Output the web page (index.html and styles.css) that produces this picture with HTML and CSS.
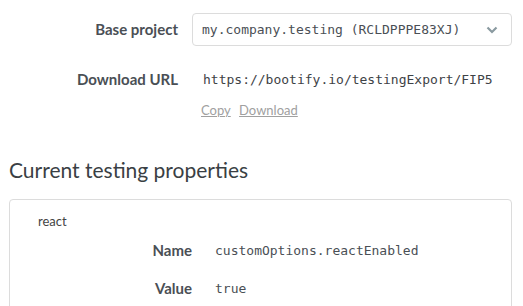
FILE: index.html
```html
<!DOCTYPE html>
<html lang="en">
<head>
  <meta charset="UTF-8">
  <title>Bootify - Testing export</title>
  <link rel="stylesheet" href="styles.css">
</head>
<body>
  <div class="page">
    <div class="form-row">
      <label class="form-label" for="baseProject">Base project</label>
      <div class="select-wrap">
        <select id="baseProject" class="form-select">
          <option>my.company.testing (RCLDPPPE83XJ)</option>
        </select>
        <svg class="chevron" width="12" height="8" viewBox="0 0 12 8"><path d="M1.5 1.5 L6 6 L10.5 1.5" fill="none" stroke="#8a9aa0" stroke-width="2.2"/></svg>
      </div>
    </div>
    <div class="form-row url-row">
      <div class="form-label">Download URL</div>
      <div class="url-box">
        <div class="url-text">https://bootify.io/testingExport/FIP5</div>
        <div class="url-links">
          <a href="#">Copy</a>
          <a href="#">Download</a>
        </div>
      </div>
    </div>

    <h2 class="section-title">Current testing properties</h2>

    <div class="card">
      <div class="card-title">react</div>
      <div class="prop-row">
        <div class="prop-label">Name</div>
        <div class="prop-value">customOptions.reactEnabled</div>
      </div>
      <div class="prop-row">
        <div class="prop-label">Value</div>
        <div class="prop-value">true</div>
      </div>
    </div>
  </div>
</body>
</html>
```

FILE: styles.css
```css
body {
  margin: 0;
  font-family: 'Lato', 'Open Sans', sans-serif;
  color: #444;
  background: #fff;
}
.page {
  padding: 13px 11px 0 9px;
  overflow: hidden;
}
.form-row {
  display: grid;
  grid-template-columns: 169px 1fr;
  column-gap: 14px;
  align-items: start;
}
.form-label {
  text-align: right;
  font-size: 15px;
  font-weight: 700;
  color: #4a4f55;
  line-height: 33px;
}
.select-wrap {
  position: relative;
}
.form-select {
  display: block;
  width: 100%;
  height: 33px;
  padding: 0 30px 0 9px;
  border: 1px solid #dcdcdc;
  border-radius: 4px;
  background: #fff;
  font-family: 'DejaVu Sans Mono', monospace;
  font-size: 13px;
  color: #4a4f55;
  appearance: none;
  -webkit-appearance: none;
}
.chevron {
  position: absolute;
  right: 14px;
  top: 13px;
}
.url-row {
  margin-top: 17px;
}
.url-box {
  min-width: 0;
  overflow: hidden;
}
.url-text {
  font-family: 'DejaVu Sans Mono', monospace;
  font-size: 13px;
  line-height: 33px;
  color: #3e4246;
  padding-left: 11px;
  white-space: nowrap;
}
.url-links {
  padding-left: 9px;
  margin-top: 5px;
  font-size: 13px;
  line-height: 18px;
}
.url-links a {
  color: #a0a0a0;
  text-decoration: underline;
  margin-right: 5px;
}
.section-title {
  margin: 37px 0 0;
  font-size: 21px;
  font-weight: 400;
  color: #3a3f44;
  line-height: 28px;
}
.card {
  margin-top: 15px;
  border: 1px solid #dcdcdc;
  border-radius: 4px;
  padding: 12px 28px 20px;
}
.card-title {
  font-size: 13px;
  color: #444;
  line-height: 18px;
}
.prop-row {
  display: grid;
  grid-template-columns: 154px 1fr;
  column-gap: 23px;
  margin-top: 5px;
  line-height: 31px;
}
.prop-row + .prop-row {
  margin-top: 7px;
}
.prop-label {
  text-align: right;
  font-size: 15px;
  font-weight: 700;
  color: #4a4f55;
}
.prop-value {
  font-family: 'DejaVu Sans Mono', monospace;
  font-size: 13px;
  color: #4a4f55;
}
```
